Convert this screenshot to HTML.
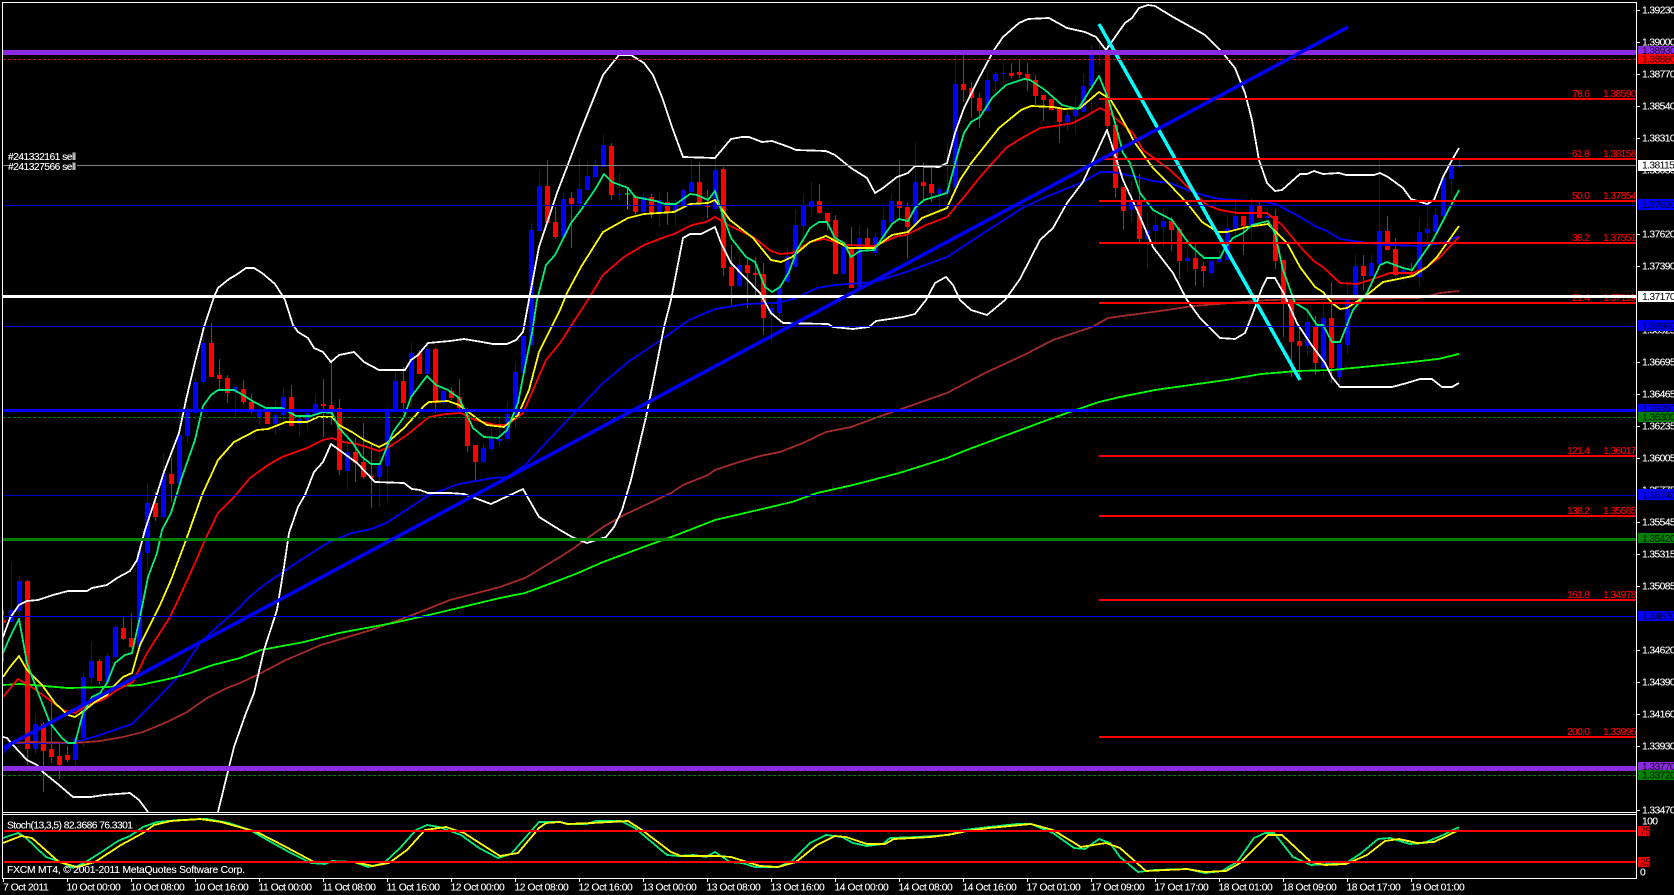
<!DOCTYPE html>
<html><head><meta charset="utf-8"><title>FXCM MT4 chart</title>
<style>
html,body{margin:0;padding:0;background:#000;width:1674px;height:895px;overflow:hidden}
svg{display:block;position:absolute;left:0;top:0}
text{font-family:"Liberation Sans",sans-serif;font-size:10.3px;fill:#fff;stroke:#fff;stroke-width:.12}
.n{letter-spacing:-.6px}
.t{letter-spacing:-.43px}
.r{fill:#f00;stroke:#f00}
.d{fill:#000;fill-opacity:.8;stroke:none}
.k{fill:#000;stroke:none}
.ma{fill:none;stroke-width:1.8;stroke-linejoin:round}
</style></head><body>
<svg width="1674" height="895" viewBox="0 0 1674 895" shape-rendering="crispEdges">
<defs>
<clipPath id="m"><rect x="3" y="3" width="1633" height="809"/></clipPath>
<clipPath id="s"><rect x="3" y="815" width="1633" height="63"/></clipPath>
</defs>
<rect width="1674" height="895" fill="#000"/>
<g clip-path="url(#m)">
<path fill="none" stroke="#00f" stroke-width="1" d="M11.5 563V622M19.5 576V613M35.5 713V754M75.5 737V766M83.5 673V747M91.5 642V684M107.5 653V683M115.5 625V658M139.5 551V647M147.5 484V572M163.5 453V518M179.5 407V485M187.5 407V443M195.5 378V415M203.5 333V385M235.5 387V417M259.5 407V425M275.5 400V435M283.5 388V426M299.5 413V436M307.5 412V429M315.5 395V415M347.5 433V490M379.5 447V507M387.5 407V501M395.5 372V411M411.5 343V407M427.5 342V374M443.5 388V406M483.5 444V463M491.5 429V449M499.5 418V446M507.5 402V441M515.5 363V428M523.5 336V373M531.5 223V345M539.5 171V231M563.5 192V240M579.5 158V210M587.5 162V190M595.5 160V177M603.5 135V167M619.5 173V201M643.5 193V213M659.5 192V227M675.5 200V227M683.5 188V205M691.5 159V192M715.5 145V209M739.5 257V287M771.5 305V342M779.5 285V317M787.5 247V282M795.5 209V267M803.5 195V236M811.5 182V217M843.5 243V275M859.5 226V287M875.5 233V256M883.5 205V245M891.5 194V222M915.5 143V225M939.5 187V210M947.5 143V197M955.5 55V188M987.5 70V111M995.5 72V93M1003.5 63V87M1067.5 107V131M1075.5 98V133M1083.5 73V112M1091.5 45V112M1099.5 40V66M1131.5 181V223M1147.5 212V268M1155.5 215V255M1163.5 207V247M1187.5 245V272M1211.5 261V273M1219.5 250V262M1227.5 215V260M1235.5 198V240M1251.5 198V240M1267.5 207V218M1307.5 310V356M1323.5 303V377M1339.5 344V385M1347.5 285V354M1355.5 255V300M1371.5 254V277M1379.5 157V264M1403.5 263V282M1419.5 219V286M1427.5 205V240M1435.5 207V232M1443.5 178V223M1451.5 166V195M1459.5 160V167"/>
<path fill="none" stroke="#00f" stroke-width="5" d="M11.5 610V622M19.5 581V611M35.5 724V749M75.5 738V760M83.5 677V738M91.5 661V678M107.5 656V682M115.5 627V657M139.5 551V647M147.5 503V553M163.5 473V517M179.5 435V484M187.5 410V436M195.5 382V413M203.5 343V382M235.5 387V392M259.5 409V417M275.5 415V424M283.5 397V415M299.5 419V424M307.5 413V422M315.5 404V415M347.5 452V471M379.5 465V477M387.5 411V466M395.5 381V411M411.5 353V397M427.5 349V374M443.5 391V403M483.5 448V462M491.5 439V449M499.5 439V441M507.5 414V439M515.5 372V415M523.5 336V373M531.5 230V345M539.5 186V231M563.5 199V237M579.5 189V204M587.5 176V190M595.5 166V177M603.5 145V167M619.5 194V195M643.5 197V212M659.5 200V212M675.5 205V212M683.5 190V205M691.5 182V192M715.5 170V209M739.5 265V286M771.5 308V313M779.5 288V313M787.5 256V282M795.5 225V267M803.5 206V226M811.5 201V207M843.5 247V274M859.5 238V287M875.5 237V253M883.5 220V238M891.5 201V222M915.5 182V225M939.5 189V194M947.5 190V193M955.5 84V188M987.5 80V111M995.5 74V81M1003.5 73V74M1067.5 115V122M1075.5 110V116M1083.5 86V112M1091.5 55V86M1099.5 52V54M1131.5 202V210M1147.5 230V239M1155.5 225V231M1163.5 221V227M1187.5 258V261M1211.5 261V273M1219.5 259V262M1227.5 228V260M1235.5 216V229M1251.5 206V225M1267.5 216V218M1307.5 322V346M1323.5 318V368M1339.5 344V377M1347.5 299V345M1355.5 266V300M1371.5 263V276M1379.5 231V264M1403.5 270V273M1419.5 232V277M1427.5 229V233M1435.5 215V232M1443.5 178V216M1451.5 166V179M1459.5 165V167"/>
<path fill="none" stroke="#f00" stroke-width="1" d="M3.5 610V662M27.5 580V765M43.5 722V792M51.5 703V763M59.5 743V779M67.5 746V762M99.5 659V684M123.5 617V640M131.5 613V648M155.5 492V521M171.5 457V502M211.5 323V377M219.5 359V389M227.5 375V403M243.5 380V404M251.5 394V413M267.5 407V424M291.5 385V426M323.5 379V437M331.5 361V425M339.5 399V475M355.5 438V482M363.5 423V479M371.5 445V508M403.5 367V413M419.5 350V374M435.5 348V413M451.5 387V400M459.5 379V410M467.5 408V452M475.5 445V482M547.5 160V223M555.5 207V239M571.5 192V248M611.5 143V200M635.5 195V215M651.5 194V218M667.5 192V225M699.5 162V202M707.5 190V218M723.5 167V276M731.5 245V305M747.5 257V308M755.5 257V298M763.5 263V335M819.5 184V214M827.5 213V230M835.5 215V274M851.5 227V288M867.5 228V250M899.5 160V218M907.5 203V259M923.5 163V200M931.5 168V202M963.5 55V102M971.5 82V118M979.5 93V128M1011.5 63V78M1019.5 60V78M1027.5 63V91M1035.5 75V105M1043.5 95V121M1051.5 99V110M1059.5 107V143M1107.5 40V130M1115.5 125V198M1123.5 187V230M1139.5 174V242M1171.5 217V251M1179.5 227V279M1195.5 243V286M1203.5 262V287M1243.5 216V255M1259.5 202V218M1275.5 209V269M1283.5 260V337M1291.5 299V377M1299.5 328V377M1315.5 316V375M1331.5 282V383M1363.5 255V290M1387.5 216V250M1395.5 238V276M1411.5 263V277"/>
<path fill="none" stroke="#f00" stroke-width="5" d="M3.5 620V623M27.5 581V749M43.5 724V751M51.5 749V757M59.5 756V765M67.5 755V760M99.5 661V681M123.5 628V639M131.5 638V647M155.5 503V517M171.5 474V484M211.5 343V377M219.5 375V379M227.5 378V393M243.5 389V402M251.5 402V409M267.5 412V424M291.5 397V426M323.5 404V406M331.5 405V409M339.5 408V470M355.5 452V463M363.5 462V477M371.5 476V478M403.5 381V403M419.5 353V374M435.5 349V403M451.5 391V398M459.5 397V408M467.5 415V446M475.5 445V462M547.5 186V223M555.5 222V237M571.5 198V204M611.5 146V195M635.5 197V212M651.5 197V213M667.5 202V212M699.5 182V202M707.5 206V207M723.5 169V268M731.5 267V286M747.5 265V273M755.5 273V275M763.5 274V318M819.5 201V213M827.5 213V222M835.5 220V274M851.5 247V288M867.5 238V248M899.5 201V208M907.5 207V227M923.5 182V186M931.5 184V193M963.5 84V90M971.5 88V98M979.5 98V111M1011.5 73V76M1019.5 72V75M1027.5 74V79M1035.5 80V96M1043.5 95V100M1051.5 99V110M1059.5 109V122M1107.5 55V126M1115.5 125V188M1123.5 187V211M1139.5 201V239M1171.5 221V230M1179.5 229V261M1195.5 258V269M1203.5 266V271M1243.5 216V226M1259.5 206V218M1275.5 216V261M1283.5 260V303M1291.5 299V342M1299.5 341V346M1315.5 327V363M1331.5 318V368M1363.5 266V276M1387.5 231V250M1395.5 249V275M1411.5 272V275"/>
<path fill="none" stroke="#0f0" stroke-width="1" d="M627.5 188V209M625 194H630"/>

<polyline class="ma" stroke="#00f" points="3,753 13,743 73,743 100,735 123,727 132,724 153,703 177,678 200,643 217,627 240,607 248,598 264,585 296,563 329,542 352,533 371,529 386,523 411,507 429,495 459,484 493,478 507,477 525,465 560,428 580,407 603,383 628,362 658,342 689,320 715,309 746,304 778,303 796,298 817,288 835,285 874,282 906,272 947,257 985,232 1024,207 1046,197 1083,182 1100,172 1113,172 1137,177 1153,181 1170,183 1193,192 1210,197 1220,199 1267,202 1278,205 1300,217 1317,227 1325,230 1340,239 1360,242 1388,245 1420,246 1443,243 1459,236"/>
<polyline class="ma" stroke="#a52a2a" points="13,743 30,742 75,743 100,741 123,737 143,732 167,722 187,712 207,698 227,688 240,683 257,675 286,660 321,645 371,630 407,617 425,610 450,600 500,587 525,578 560,557 574,548 603,527 624,515 671,493 683,485 708,475 715,470 739,462 760,456 780,452 803,443 826,432 851,427 881,416 947,393 985,373 1024,355 1053,340 1092,327 1108,318 1130,315 1160,311 1193,306 1243,302 1267,300 1420,298 1440,293 1459,291"/>
<polyline class="ma" stroke="#0f0" points="3,685 20,684 68,688 107,687 140,685 173,678 190,673 213,665 240,658 261,650 304,642 339,633 393,623 429,615 500,598 525,593 560,580 578,573 603,562 649,545 674,536 715,520 792,502 817,493 853,485 899,473 947,458 964,451 1042,422 1067,413 1099,402 1120,397 1155,390 1226,380 1261,374 1297,371 1332,370 1403,363 1438,359 1459,354"/>
<polyline class="ma" stroke="#f00" points="3,697 18,679 33,688 47,698 63,710 75,713 88,705 103,700 117,690 133,682 147,653 170,617 179,598 195,563 204,542 218,513 234,497 250,478 268,465 282,457 307,448 323,440 332,438 343,442 357,444 379,451 389,447 407,435 429,417 446,414 461,413 475,420 496,425 507,425 523,413 536,383 546,360 560,343 589,298 603,275 624,257 644,245 665,237 674,234 692,225 706,222 715,217 728,225 753,237 771,251 780,254 792,253 810,242 824,239 846,245 874,246 898,236 906,235 926,225 947,217 964,197 980,177 1006,148 1020,139 1040,128 1055,126 1073,123 1088,115 1100,108 1108,112 1133,133 1143,150 1170,170 1193,192 1207,205 1220,210 1237,213 1267,213 1282,225 1303,250 1315,262 1323,267 1340,283 1357,284 1370,280 1390,273 1413,273 1427,267 1440,257 1459,237"/>
<polyline class="ma" stroke="#ff0" points="3,677 10,667 19,656 27,670 42,685 55,703 68,715 75,717 85,710 95,702 107,695 115,685 123,677 132,673 140,645 150,625 160,605 171,580 186,540 202,495 218,460 234,442 257,430 268,429 286,422 307,422 318,417 332,417 339,425 352,432 364,440 379,447 387,443 404,428 414,417 425,405 429,402 448,401 459,405 479,420 487,425 504,427 518,415 529,390 539,352 560,310 567,293 581,267 603,232 628,218 644,214 674,212 690,204 708,203 715,200 730,220 753,238 771,260 781,262 792,257 810,242 826,236 849,248 874,248 892,235 908,232 922,218 947,208 960,180 972,162 999,128 1021,110 1031,106 1053,107 1064,109 1080,108 1099,92 1110,99 1120,115 1135,143 1153,168 1170,185 1187,203 1202,222 1218,232 1227,232 1247,227 1268,224 1287,243 1300,267 1315,287 1323,292 1332,303 1340,309 1347,308 1367,295 1383,282 1413,276 1427,267 1437,257 1459,226"/>
<polyline class="ma" stroke="#00ee76" points="3,653 10,637 19,619 27,663 37,690 50,723 62,738 68,743 75,743 83,713 92,697 100,693 107,683 115,663 125,655 132,653 140,617 148,577 157,553 162,530 171,513 182,477 195,440 203,406 211,395 218,390 234,390 243,395 254,402 266,408 282,408 296,416 311,416 323,412 332,413 339,428 352,442 362,457 371,464 380,464 393,432 404,417 411,397 427,376 436,385 448,390 459,398 473,428 484,437 498,438 507,430 518,403 525,367 532,333 537,300 546,265 555,255 560,245 571,223 581,210 596,188 604,174 612,182 628,188 635,197 656,201 665,204 676,204 690,194 697,195 708,200 715,191 722,213 731,238 746,257 755,262 765,287 772,292 780,287 789,272 797,250 810,228 819,222 827,222 835,238 844,243 851,257 860,251 874,250 892,224 899,219 908,221 915,208 924,200 947,193 956,160 964,133 971,122 980,117 992,98 1006,85 1024,79 1030,80 1045,90 1062,105 1078,109 1099,76 1108,98 1117,130 1123,153 1130,163 1140,193 1153,210 1172,220 1190,245 1204,258 1220,258 1225,248 1233,238 1243,233 1252,225 1268,221 1275,233 1283,270 1295,303 1307,310 1317,325 1323,325 1332,342 1340,342 1353,310 1367,293 1380,265 1387,262 1403,268 1412,270 1433,240 1459,190"/>
<polyline class="ma" stroke="#fff" points="3,637 10,618 19,605 27,601 38,600 53,595 68,591 87,591 92,588 107,585 117,578 130,571 137,560 145,530 155,500 164,472 179,433 186,400 195,362 204,327 214,297 218,288 229,279 236,275 246,268 254,268 262,273 275,284 282,295 285,300 293,325 298,332 308,338 314,348 323,352 331,362 339,355 354,352 364,362 379,370 405,370 411,360 418,355 428,343 450,341 464,339 482,342 493,344 507,344 516,340 523,332 529,300 539,247 557,193 567,167 581,130 603,75 619,55 631,55 644,63 653,75 662,97 672,127 683,157 715,158 731,139 742,137 749,137 762,142 772,141 789,147 796,150 826,151 835,155 851,168 867,178 875,193 883,188 897,177 908,173 915,166 939,167 947,163 955,133 964,108 978,80 994,50 1003,37 1019,23 1028,19 1049,18 1067,28 1085,32 1096,37 1106,50 1120,30 1125,23 1132,18 1139,8 1148,5 1155,6 1173,17 1191,27 1205,35 1222,52 1235,68 1245,93 1252,120 1259,160 1267,183 1275,191 1282,190 1300,174 1307,174 1314,171 1323,174 1339,173 1346,175 1374,175 1380,173 1388,177 1403,188 1411,199 1427,204 1434,200 1443,177 1452,160 1459,148"/>
<polyline class="ma" stroke="#fff" points="3,737 7,738 13,745 27,760 37,765 43,772 59,785 73,797 91,797 104,795 130,793 139,800 148,812"/>
<polyline class="ma" stroke="#fff" points="218,812 229,767 234,747 246,713 254,693 264,650 277,610 284,567 289,533 298,507 305,495 314,472 323,462 331,444 357,463 375,482 404,483 412,489 420,490 428,493 450,493 464,494 491,504 523,489 539,517 560,530 572,537 587,543 606,537 614,527 622,510 631,480 646,417 655,373 664,327 671,300 683,238 690,234 701,234 715,227 721,243 731,263 760,293 771,313 783,323 828,324 833,327 853,329 869,327 876,321 903,317 915,314 926,300 935,283 946,277 953,285 960,300 971,310 987,315 1005,300 1020,279 1040,240 1053,228 1067,203 1083,182 1107,130 1123,180 1137,210 1153,247 1173,273 1187,300 1200,318 1220,338 1235,339 1245,333 1253,313 1262,288 1267,278 1275,278 1283,292 1297,323 1313,347 1325,363 1332,377 1340,387 1392,387 1407,383 1420,379 1432,379 1442,387 1452,387 1459,383"/>

<line x1="1099" y1="24" x2="1300" y2="380" stroke="#0ff" stroke-width="3.5"/>
<rect x="3" y="165" width="1633" height="1" fill="#808080"/>
<rect x="3" y="205" width="1633" height="1" fill="#0000cd"/>
<rect x="3" y="326" width="1633" height="1" fill="#0000e0"/>
<rect x="3" y="495" width="1633" height="1" fill="#0000cd"/>
<rect x="3" y="616" width="1633" height="1" fill="#0000e6"/>
<line x1="3" y1="59.5" x2="1636" y2="59.5" stroke="#d01010" stroke-dasharray="3 2"/>
<line x1="3" y1="417.5" x2="1636" y2="417.5" stroke="#008000" stroke-dasharray="3 2"/>
<line x1="3" y1="775.5" x2="1636" y2="775.5" stroke="#008000" stroke-dasharray="3 2"/>
<rect x="3" y="50" width="1633" height="5" fill="#8a2be2"/>
<rect x="3" y="766" width="1633" height="5" fill="#8a2be2"/>
<text class="r" x="1572" y="301" textLength="18">21.4</text><text class="r n" x="1603" y="301">1.37119</text>
<rect x="3" y="295" width="1633" height="3" fill="#fff"/>
<rect x="3" y="409" width="1633" height="3" fill="#00f"/>
<rect x="3" y="538" width="1633" height="3" fill="#008000"/>
<g fill="#f00">
<rect x="1099" y="98" width="537" height="2"/>
<rect x="1099" y="158" width="537" height="2"/>
<rect x="1099" y="200" width="537" height="2"/>
<rect x="1099" y="242" width="537" height="2"/>
<rect x="1099" y="302" width="537" height="2"/>
<rect x="1099" y="455" width="537" height="2"/>
<rect x="1099" y="515" width="537" height="2"/>
<rect x="1099" y="599" width="537" height="2"/>
<rect x="1099" y="736" width="537" height="2"/>
</g>
<line x1="3" y1="748" x2="1348" y2="27" stroke="#00f" stroke-width="3.5"/>
</g>

<g clip-path="url(#s)">
<polyline class="ma" stroke="#00ee76" points="3,838 18,833 25,837 46,857 61,862 73,868 84,863 100,853 118,841 130,836 143,827 157,822 179,820 207,819 229,823 250,830 271,842 289,852 311,863 325,864 332,861 354,862 368,867 384,863 400,848 416,830 427,825 439,827 461,835 479,848 498,858 511,854 532,830 539,822 560,822 569,824 587,824 596,821 621,821 635,828 667,855 678,856 694,855 706,857 715,852 730,862 742,863 755,867 778,867 792,861 810,843 826,835 842,837 853,843 867,846 883,844 890,838 917,837 949,835 964,830 989,827 1017,824 1031,824 1053,833 1074,848 1085,849 1099,839 1110,843 1120,857 1138,872 1155,870 1187,869 1205,873 1222,871 1237,862 1254,838 1265,833 1274,833 1293,857 1311,865 1346,863 1360,854 1378,839 1390,838 1410,844 1424,843 1443,835 1459,827"/>
<polyline class="ma" stroke="#ff0" points="3,843 21,836 32,838 59,862 77,867 95,862 121,845 143,833 154,825 171,821 200,819 221,822 257,832 286,847 314,862 354,862 373,866 389,863 407,850 425,830 446,827 464,833 500,856 518,853 539,828 546,823 560,822 567,824 592,823 628,821 642,830 671,852 681,856 717,856 731,857 760,866 778,867 796,862 817,845 835,836 846,837 867,844 885,844 894,839 931,837 953,834 967,831 989,828 1031,824 1053,830 1081,847 1106,843 1120,848 1146,871 1187,869 1205,872 1226,871 1240,863 1268,835 1282,835 1311,862 1325,865 1346,864 1367,855 1385,841 1399,839 1417,843 1434,842 1459,830"/>
<rect x="4" y="830" width="1632" height="2" fill="#f00"/>
<rect x="4" y="861" width="1632" height="2" fill="#f00"/>
</g>

<!-- frames -->
<g fill="#fff">
<rect x="2" y="2" width="1634" height="1"/>
<rect x="2" y="2" width="1" height="876"/>
<rect x="1636" y="2" width="1" height="876"/>
<rect x="2" y="812" width="1635" height="1"/>
<rect x="2" y="814" width="1635" height="1"/>
<rect x="2" y="878" width="1635" height="1"/>
</g>
<g fill="#fff">
<path d="M3 878h1v4h-1zM67 878h1v4h-1zM131 878h1v4h-1zM195 878h1v4h-1zM259 878h1v4h-1zM323 878h1v4h-1zM387 878h1v4h-1zM451 878h1v4h-1zM515 878h1v4h-1zM579 878h1v4h-1zM643 878h1v4h-1zM707 878h1v4h-1zM771 878h1v4h-1zM835 878h1v4h-1zM899 878h1v4h-1zM963 878h1v4h-1zM1027 878h1v4h-1zM1091 878h1v4h-1zM1155 878h1v4h-1zM1219 878h1v4h-1zM1283 878h1v4h-1zM1347 878h1v4h-1zM1411 878h1v4h-1z"/>
<path d="M1637 10h3v1h-3zM1637 42h3v1h-3zM1637 74h3v1h-3zM1637 106h3v1h-3zM1637 138h3v1h-3zM1637 234h3v1h-3zM1637 266h3v1h-3zM1637 362h3v1h-3zM1637 394h3v1h-3zM1637 426h3v1h-3zM1637 458h3v1h-3zM1637 522h3v1h-3zM1637 554h3v1h-3zM1637 586h3v1h-3zM1637 650h3v1h-3zM1637 682h3v1h-3zM1637 714h3v1h-3zM1637 746h3v1h-3zM1637 810h3v1h-3z"/>
</g>

<!-- chart text -->
<rect x="8" y="152" width="69" height="20" fill="#000"/>
<text x="8" y="160" textLength="68">#241332161 sell</text>
<text x="8" y="170" textLength="68">#241327566 sell</text>
<text x="7" y="828.5" textLength="126">Stoch(13,3,5) 82.3686 76.3301</text>
<text x="7" y="873" textLength="238">FXCM MT4, © 2001-2011 MetaQuotes Software Corp.</text>

<g>
<text class="r" x="1572" y="97" textLength="18">78.6</text><text class="r n" x="1603" y="97">1.38590</text>
<text class="r" x="1572" y="157" textLength="18">61.8</text><text class="r n" x="1603" y="157">1.38158</text>
<text class="r" x="1572" y="199" textLength="18">50.0</text><text class="r n" x="1603" y="199">1.37854</text>
<text class="r" x="1572" y="241" textLength="18">38.2</text><text class="r n" x="1603" y="241">1.37551</text>
<text class="r" x="1567" y="454" textLength="23">121.4</text><text class="r n" x="1603" y="454">1.36017</text>
<text class="r" x="1567" y="514" textLength="23">138.2</text><text class="r n" x="1603" y="514">1.35585</text>
<text class="r" x="1567" y="598" textLength="23">161.8</text><text class="r n" x="1603" y="598">1.34978</text>
<text class="r" x="1567" y="735" textLength="23">200.0</text><text class="r n" x="1603" y="735">1.33995</text>
</g>

<!-- axis labels -->
<g class="n">
<text class="n" x="1642" y="13.5">1.39230</text>
<text class="n" x="1642" y="45.5">1.39000</text>
<text class="n" x="1642" y="77.5">1.38770</text>
<text class="n" x="1642" y="109.5">1.38540</text>
<text class="n" x="1642" y="141.5">1.38310</text>
<text class="n" x="1642" y="173.5">1.38080</text>
<text class="n" x="1642" y="237.5">1.37620</text>
<text class="n" x="1642" y="269.5">1.37390</text>
<text class="n" x="1642" y="333.5">1.36925</text>
<text class="n" x="1642" y="365.5">1.36695</text>
<text class="n" x="1642" y="397.5">1.36465</text>
<text class="n" x="1642" y="429.5">1.36235</text>
<text class="n" x="1642" y="461.5">1.36005</text>
<text class="n" x="1642" y="493.5">1.35775</text>
<text class="n" x="1642" y="525.5">1.35545</text>
<text class="n" x="1642" y="557.5">1.35315</text>
<text class="n" x="1642" y="589.5">1.35085</text>
<text class="n" x="1642" y="653.5">1.34620</text>
<text class="n" x="1642" y="685.5">1.34390</text>
<text class="n" x="1642" y="717.5">1.34160</text>
<text class="n" x="1642" y="749.5">1.33930</text>
<text class="n" x="1642" y="813.5">1.33470</text>
</g>
<g>
<rect x="1638" y="46" width="36" height="9" fill="#8a2be2"/><text class="n d" x="1642" y="54">1.38930</text>
<rect x="1638" y="54" width="36" height="10" fill="#f00"/><text class="n d" x="1642" y="62.5">1.38880</text>
<rect x="1638" y="160" width="36" height="11" fill="#fff"/><text class="n k" x="1642" y="168.5">1.38115</text>
<rect x="1638" y="199" width="36" height="11" fill="#00f"/><text class="n d" x="1642" y="208">1.37830</text>
<rect x="1638" y="291" width="36" height="11" fill="#fff"/><text class="n k" x="1642" y="300">1.37170</text>
<rect x="1638" y="320" width="36" height="11" fill="#00f"/><text class="n d" x="1642" y="329.5">1.36960</text>
<rect x="1638" y="404" width="36" height="8" fill="#00f"/><text class="n d" x="1642" y="412">1.36350</text>
<rect x="1638" y="412" width="36" height="10" fill="#008000"/><text class="n d" x="1642" y="420.5">1.36300</text>
<rect x="1638" y="489" width="36" height="11" fill="#00f"/><text class="n d" x="1642" y="498.5">1.35740</text>
<rect x="1638" y="533" width="36" height="10" fill="#008000"/><text class="n d" x="1642" y="542">1.35420</text>
<rect x="1638" y="611" width="36" height="10" fill="#00f"/><text class="n d" x="1642" y="619.5">1.34870</text>
<rect x="1638" y="762" width="36" height="8" fill="#8a2be2"/><text class="n d" x="1642" y="770">1.33770</text>
<rect x="1638" y="770" width="36" height="10" fill="#008000"/><text class="n d" x="1642" y="778.5">1.33720</text>
<text x="1642" y="824.5" class="n">100</text>
<rect x="1638" y="826" width="12" height="10" fill="#f00"/><text class="n d" x="1640" y="834.5">75</text>
<rect x="1638" y="857" width="12" height="10" fill="#f00"/><text class="n d" x="1640" y="865.5">25</text>
<text x="1640" y="875.5" class="n">0</text>
</g>

<!-- time labels -->
<g>
<text class="t" x="3" y="890.5">7 Oct 2011</text>
<text class="t" x="66.5" y="890.5">10 Oct 00:00</text>
<text class="t" x="130.5" y="890.5">10 Oct 08:00</text>
<text class="t" x="194.5" y="890.5">10 Oct 16:00</text>
<text class="t" x="258.5" y="890.5">11 Oct 00:00</text>
<text class="t" x="322.5" y="890.5">11 Oct 08:00</text>
<text class="t" x="386.5" y="890.5">11 Oct 16:00</text>
<text class="t" x="450.5" y="890.5">12 Oct 00:00</text>
<text class="t" x="514.5" y="890.5">12 Oct 08:00</text>
<text class="t" x="578.5" y="890.5">12 Oct 16:00</text>
<text class="t" x="642.5" y="890.5">13 Oct 00:00</text>
<text class="t" x="706.5" y="890.5">13 Oct 08:00</text>
<text class="t" x="770.5" y="890.5">13 Oct 16:00</text>
<text class="t" x="834.5" y="890.5">14 Oct 00:00</text>
<text class="t" x="898.5" y="890.5">14 Oct 08:00</text>
<text class="t" x="962.5" y="890.5">14 Oct 16:00</text>
<text class="t" x="1026.5" y="890.5">17 Oct 01:00</text>
<text class="t" x="1090.5" y="890.5">17 Oct 09:00</text>
<text class="t" x="1154.5" y="890.5">17 Oct 17:00</text>
<text class="t" x="1218.5" y="890.5">18 Oct 01:00</text>
<text class="t" x="1282.5" y="890.5">18 Oct 09:00</text>
<text class="t" x="1346.5" y="890.5">18 Oct 17:00</text>
<text class="t" x="1410.5" y="890.5">19 Oct 01:00</text>
</g>
</svg>
</body></html>
